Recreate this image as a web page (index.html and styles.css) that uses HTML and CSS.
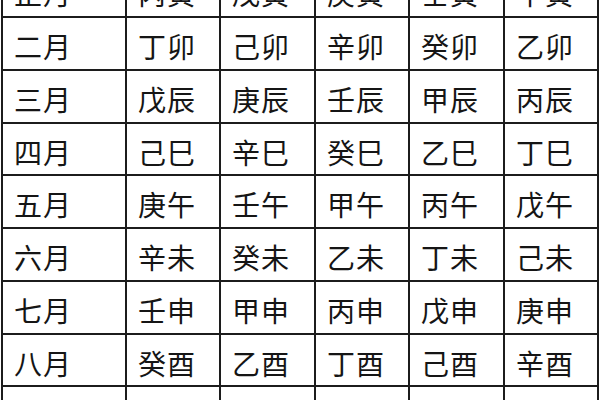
FILE: index.html
```html
<!DOCTYPE html>
<html lang="zh-CN">
<head>
<meta charset="utf-8">
<title>月干支表</title>
<link rel="stylesheet" href="styles.css">
</head>
<body>
<div class="ganzhi">
  <div class="cell">正月</div><div class="cell">丙寅</div><div class="cell">戊寅</div><div class="cell">庚寅</div><div class="cell">壬寅</div><div class="cell">甲寅</div>
  <div class="cell">二月</div><div class="cell">丁卯</div><div class="cell">己卯</div><div class="cell">辛卯</div><div class="cell">癸卯</div><div class="cell">乙卯</div>
  <div class="cell">三月</div><div class="cell">戊辰</div><div class="cell">庚辰</div><div class="cell">壬辰</div><div class="cell">甲辰</div><div class="cell">丙辰</div>
  <div class="cell">四月</div><div class="cell">己巳</div><div class="cell">辛巳</div><div class="cell">癸巳</div><div class="cell">乙巳</div><div class="cell">丁巳</div>
  <div class="cell">五月</div><div class="cell">庚午</div><div class="cell">壬午</div><div class="cell">甲午</div><div class="cell">丙午</div><div class="cell">戊午</div>
  <div class="cell">六月</div><div class="cell">辛未</div><div class="cell">癸未</div><div class="cell">乙未</div><div class="cell">丁未</div><div class="cell">己未</div>
  <div class="cell">七月</div><div class="cell">壬申</div><div class="cell">甲申</div><div class="cell">丙申</div><div class="cell">戊申</div><div class="cell">庚申</div>
  <div class="cell">八月</div><div class="cell">癸酉</div><div class="cell">乙酉</div><div class="cell">丁酉</div><div class="cell">己酉</div><div class="cell">辛酉</div>
  <div class="cell">九月</div><div class="cell">甲戌</div><div class="cell">丙戌</div><div class="cell">戊戌</div><div class="cell">庚戌</div><div class="cell">壬戌</div>
</div>
</body>
</html>
```

FILE: styles.css
```css
html, body {
  margin: 0;
  padding: 0;
  background: #ffffff;
  overflow: hidden;
}

.ganzhi {
  display: grid;
  grid-template-columns: 122px 92px 93px 92px 93px 92px;
  grid-auto-rows: 50.75px;
  gap: 2px;
  padding: 2px;
  width: max-content;
  background: #1c1c1c;
  margin: -36.75px 0 0 1px;
}

.cell {
  background: #ffffff;
  color: #151515;
  font-family: "Noto Sans CJK SC", "Noto Sans CJK JP", sans-serif;
  font-size: 28px;
  line-height: 28px;
  letter-spacing: 1px;
  padding: 14px 0 0 11px;
  box-sizing: border-box;
  white-space: nowrap;
}
```
